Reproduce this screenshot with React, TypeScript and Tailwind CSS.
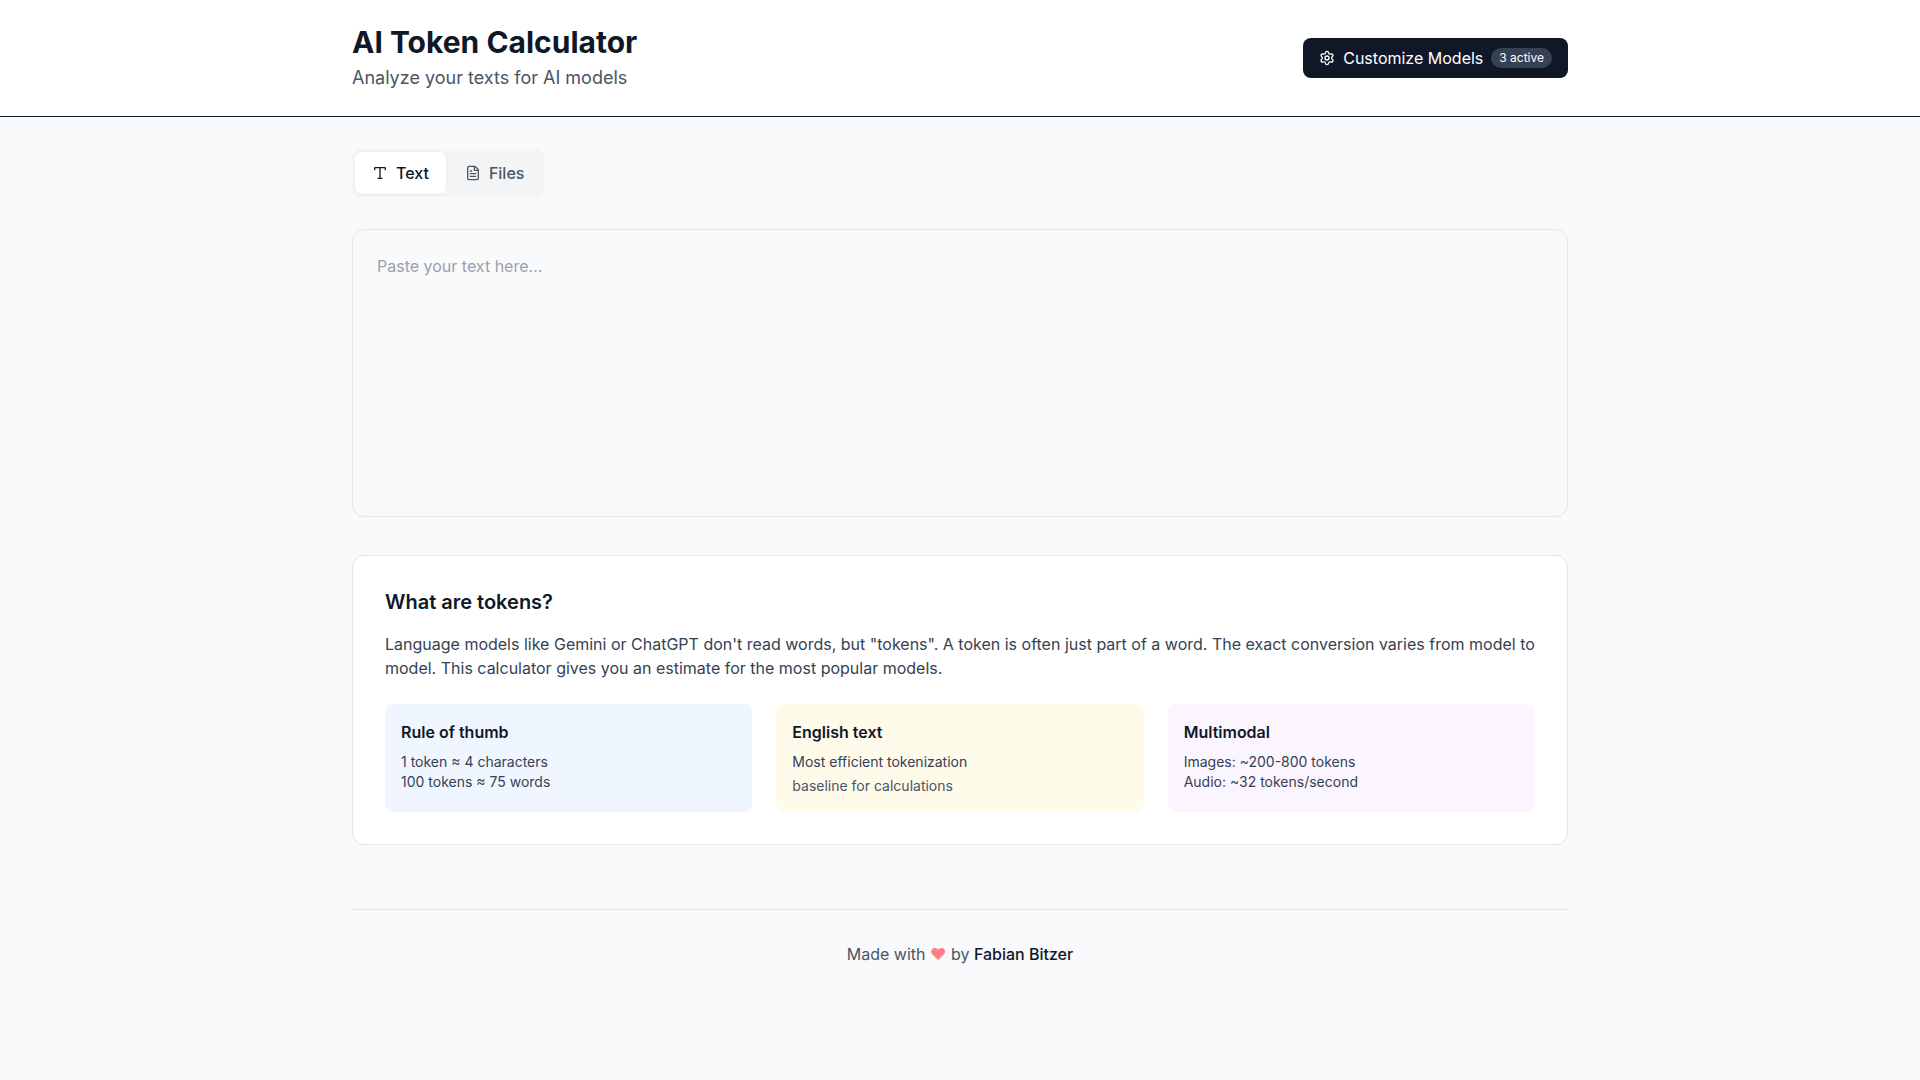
import { useState } from "react";
import { FileText, Settings, Type } from "lucide-react";

const tabs = [
  { id: "text", label: "Text", icon: Type },
  { id: "files", label: "Files", icon: FileText },
];

export default function App() {
  const [activeTab, setActiveTab] = useState("text");
  const [text, setText] = useState("");

  return (
    <div className="min-h-screen bg-gray-50 font-['Inter',sans-serif] text-gray-900 antialiased">
      <header className="border-b border-gray-900 bg-white">
        <div className="mx-auto flex max-w-7xl items-center justify-between px-8 py-6">
          <div>
            <h1 className="text-3xl font-bold">AI Token Calculator</h1>
            <p className="mt-1 text-lg text-gray-600">
              Analyze your texts for AI models
            </p>
          </div>
          <button
            type="button"
            className="flex items-center gap-2 rounded-lg bg-gray-900 px-4 py-2 text-white"
          >
            <Settings className="h-4 w-4" />
            <span>Customize Models</span>
            <span className="rounded-full bg-gray-700 px-2 py-0.5 text-xs">
              3 active
            </span>
          </button>
        </div>
      </header>

      <main className="mx-auto max-w-7xl px-8 py-8">
        {/* Input mode */}
        <div className="mb-8 flex w-fit gap-1 rounded-lg bg-gray-100 p-1">
          {tabs.map(({ id, label, icon: Icon }) => (
            <button
              key={id}
              type="button"
              onClick={() => setActiveTab(id)}
              className={`flex items-center gap-2 rounded-md px-4 py-2 font-medium ${
                activeTab === id
                  ? "bg-white text-gray-900 shadow-sm ring-1 ring-white"
                  : "text-gray-600"
              }`}
            >
              <Icon className="h-4 w-4" />
              {label}
            </button>
          ))}
        </div>

        <div className="mb-8">
          <textarea
            aria-label="Text to analyze"
            value={text}
            onChange={(e) => setText(e.target.value)}
            placeholder="Paste your text here..."
            className="inline-block h-72 w-full resize-none rounded-xl border border-gray-200 p-6 align-baseline placeholder:text-gray-400"
          />
        </div>

        <section className="rounded-xl border border-gray-200 bg-white p-8">
          <h2 className="mb-4 text-xl font-semibold">What are tokens?</h2>
          <p className="mb-6 text-gray-700">
            Language models like Gemini or ChatGPT don't read words, but
            "tokens". A token is often just part of a word. The exact conversion
            varies from model to model. This calculator gives you an estimate
            for the most popular models.
          </p>
          <div className="grid gap-6 text-sm md:grid-cols-3">
            <div className="rounded-lg bg-blue-50 p-4">
              <h3 className="mb-2 text-base font-semibold">Rule of thumb</h3>
              <p className="text-gray-700">
                1 token ≈ 4 characters
                <br />
                100 tokens ≈ 75 words
              </p>
            </div>
            <div className="rounded-lg bg-amber-50 p-4">
              <h3 className="mb-2 text-base font-semibold">English text</h3>
              <p className="text-gray-700">Most efficient tokenization</p>
              <p className="mt-1 text-gray-600">baseline for calculations</p>
            </div>
            <div className="rounded-lg bg-purple-50 p-4">
              <h3 className="mb-2 text-base font-semibold">Multimodal</h3>
              <p className="text-gray-700">
                Images: ~200-800 tokens
                <br />
                Audio: ~32 tokens/second
              </p>
            </div>
          </div>
        </section>

        <footer className="mt-16 border-t border-gray-200 py-8 text-center text-gray-600">
          Made with <span className="text-red-400 opacity-80">♥</span> by{" "}
          <a href="#" className="font-medium text-gray-900">
            Fabian Bitzer
          </a>
        </footer>
      </main>
    </div>
  );
}
